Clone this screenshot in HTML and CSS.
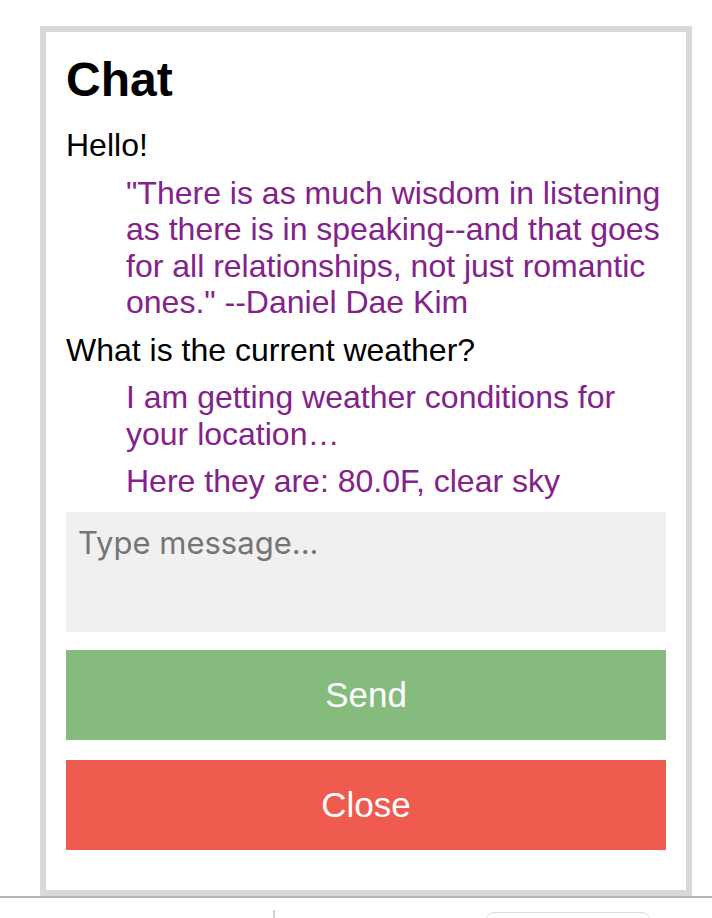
FILE: index.html
```html
<!DOCTYPE html>
<html lang="en">
<head>
<meta charset="utf-8">
<title>Chat</title>
<link rel="stylesheet" href="styles.css">
</head>
<body>
<div class="chat">
  <h1 class="title">Chat</h1>
  <div class="messages">
    <p class="msg user">Hello!</p>
    <p class="msg bot">"There is as much wisdom in listening as there is in speaking--and that goes for all relationships, not just romantic ones." --Daniel Dae Kim</p>
    <p class="msg user">What is the current weather?</p>
    <p class="msg bot">I am getting weather conditions for your location…</p>
    <p class="msg bot">Here they are: 80.0F, clear sky</p>
  </div>
  <textarea class="input" placeholder="Type message..."></textarea>
  <button class="btn send">Send</button>
  <button class="btn close">Close</button>
</div>
<div class="footer">
  <span class="divider"></span>
  <span class="pill"></span>
</div>
</body>
</html>
```

FILE: styles.css
```css
html, body {
  margin: 0;
  padding: 0;
  background: #ffffff;
}

body {
  font-family: "Liberation Sans", Arial, sans-serif;
  color: #000;
}

.chat {
  box-sizing: border-box;
  width: 652px;
  margin: 26px 0 0 40px;
  border: 6px solid #d6dadd;
  padding: 20px 20px 40px;
  display: flex;
  flex-direction: column;
  background: #fff;
}

.title {
  margin: 0 0 20px;
  font-size: 48px;
  font-weight: bold;
  line-height: 55px;
}

.messages {
  display: flex;
  flex-direction: column;
  gap: 11px;
}

.msg {
  margin: 0;
  font-size: 32px;
  line-height: 36.5px;
}

.msg.user {
  color: #000;
}

.msg.bot {
  color: #84218a;
  margin-left: 60px;
}

.input {
  box-sizing: border-box;
  display: block;
  width: 600px;
  height: 120px;
  margin-top: 12px;
  padding: 12px;
  border: none;
  outline: none;
  resize: none;
  background: #f0f0f0;
  font-family: Inter, "Open Sans", sans-serif;
  font-size: 31px;
  color: #333;
}

.input::placeholder {
  color: #757575;
}

.btn {
  display: block;
  width: 600px;
  height: 90px;
  border: none;
  padding: 0;
  color: #fff;
  font-family: "Liberation Sans", Arial, sans-serif;
  font-size: 35px;
  cursor: pointer;
}

.send {
  margin-top: 18px;
  background: #86bb7e;
}

.close {
  margin-top: 20px;
  background: #ef5b4f;
}

.footer {
  border-top: 2px solid #b3b3b3;
  height: 40px;
  display: flex;
  align-items: flex-start;
}

.divider {
  display: block;
  width: 2px;
  height: 12px;
  margin: 12px 0 0 273px;
  background: #d0d0d0;
}

.pill {
  display: block;
  box-sizing: border-box;
  width: 164px;
  height: 30px;
  margin: 14px 0 0 211px;
  border: 1px solid #dcdcdc;
  border-radius: 8px;
}
```
